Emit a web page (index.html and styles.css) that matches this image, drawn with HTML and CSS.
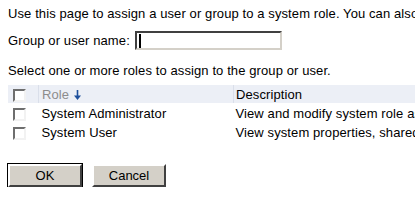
FILE: index.html
```html
<!DOCTYPE html>
<html lang="en">
<head>
  <meta charset="UTF-8" />
  <title>Assign system role</title>
  <link rel="stylesheet" href="styles.css">
</head>
<body>

  <p class="intro">Use this page to assign a user or group to a system role. You can also add roles later.</p>

  <div class="name-row">
    <label for="who">Group or user name:</label>
    <div class="name-input">
      <span class="caret"></span>
      <input type="text" id="who" />
    </div>
  </div>

  <p class="hint">Select one or more roles to assign to the group or user.</p>

  <table class="roles">
    <tr class="head">
      <th class="check"><span class="box"></span></th>
      <th class="role">Role
        <svg class="arrow" width="7" height="10" viewBox="0 0 7 10">
          <path d="M3.5 0 V8" stroke="#1d4f9c" stroke-width="1.6" fill="none"/>
          <path d="M0 5.5 L3.5 10 L7 5.5 Z" fill="#1d4f9c"/>
        </svg>
      </th>
      <th class="desc">Description</th>
    </tr>
    <tr>
      <td class="check"><span class="box"></span></td>
      <td class="role">System Administrator</td>
      <td class="desc">View and modify system role assignments</td>
    </tr>
    <tr>
      <td class="check"><span class="box"></span></td>
      <td class="role">System User</td>
      <td class="desc">View system properties, shared settings</td>
    </tr>
  </table>

  <div class="buttons">
    <button class="btn default">OK</button>
    <button class="btn">Cancel</button>
  </div>

</body>
</html>
```

FILE: styles.css
```css
body {
  margin: 0;
  padding: 6px 0 0 8px;
  font-family: 'Liberation Sans', Arial, sans-serif;
  font-size: 13px;
  letter-spacing: 0.1px;
  color: #000;
  background: #fff;
  overflow: hidden;
  white-space: nowrap;
}
p {
  margin: 0;
  line-height: 15px;
}
.name-row {
  display: flex;
  align-items: center;
  gap: 5px;
  margin-top: 10px;
}
.name-input {
  position: relative;
  width: 143px;
  height: 15px;
  border: 2px solid;
  border-color: #404040 #d4d0c8 #d4d0c8 #404040;
  background: #fff;
}
.name-input input {
  width: 100%;
  height: 100%;
  border: 0;
  padding: 0 2px;
  margin: 0;
  outline: none;
  font: inherit;
  box-sizing: border-box;
}
.caret {
  position: absolute;
  left: 2px;
  top: 1px;
  width: 1px;
  height: 13px;
  background: #000;
  border-top: 1px solid #000;
  box-shadow: 1px 0 0 #000;
}
.hint {
  margin-top: 13px;
}
.roles {
  border-collapse: collapse;
  margin-top: 7px;
  width: 520px;
}
.roles th {
  background: #eceff6;
  font-weight: normal;
  text-align: left;
  height: 18px;
  padding: 0;
}
.roles td {
  height: 18px;
  padding: 1px 0 0;
}
.roles .check {
  width: 25px;
  padding-left: 5px;
  text-align: left;
}
.roles .role {
  width: 191px;
  padding-left: 3px;
}
.roles .desc {
  padding-left: 2px;
}
.roles th.role,
.roles th.desc {
  border-left: 1px solid #dadfea;
}
.roles th.role {
  color: #8c8c8c;
}
.arrow {
  vertical-align: -1px;
  margin-left: 1px;
}
.box {
  display: inline-block;
  width: 9px;
  height: 9px;
  border: 2px solid;
  border-color: #6e6e6e #f2f2f2 #f2f2f2 #6e6e6e;
  background: #fff;
  vertical-align: middle;
}
.buttons {
  display: flex;
  gap: 10px;
  margin-top: 23px;
}
.btn {
  width: 74px;
  height: 23px;
  padding: 0;
  background: #d4d0c8;
  border: 2px solid;
  border-color: #fff #404040 #404040 #fff;
  font-family: 'Liberation Sans', Arial, sans-serif;
  font-size: 13px;
  color: #000;
}
.btn.default {
  outline: 1px solid #000;
}
```
